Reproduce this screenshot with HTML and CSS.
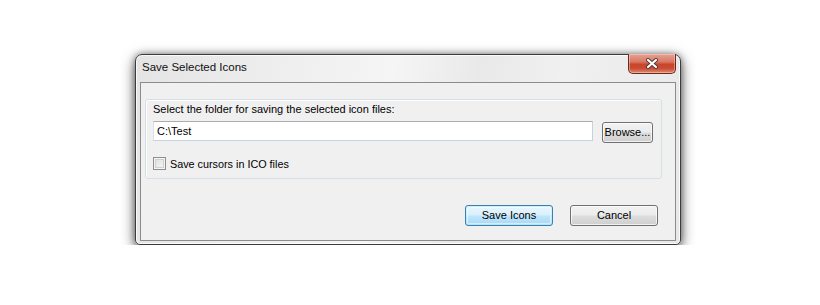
FILE: index.html
```html
<!DOCTYPE html>
<html>
<head>
<meta charset="utf-8">
<link rel="stylesheet" href="styles.css">
</head>
<body>
<div class="window">
  <div class="titlebar">
    <span class="title">Save Selected Icons</span>
    <div class="close">
      <svg width="14" height="11" viewBox="0 0 14 11">
        <path d="M3 2 L11 9 M11 2 L3 9" stroke="#4a3a38" stroke-width="4" stroke-linecap="round"/>
        <path d="M3 2 L11 9 M11 2 L3 9" stroke="#ffffff" stroke-width="2.2" stroke-linecap="round"/>
      </svg>
    </div>
  </div>
  <div class="client">
    <div class="group">
      <div class="label">Select the folder for saving the selected icon files:</div>
      <div class="path-row">
        <div class="textbox">C:\Test</div>
        <div class="btn browse">Browse...</div>
      </div>
      <div class="check-row">
        <span class="checkbox"></span>
        <span class="check-label">Save cursors in ICO files</span>
      </div>
    </div>
    <div class="actions">
      <div class="btn default">Save Icons</div>
      <div class="btn">Cancel</div>
    </div>
  </div>
</div>
</body>
</html>
```

FILE: styles.css
```css
html, body {
  margin: 0;
  padding: 0;
}
body {
  background: #ffffff;
  padding: 54px 0 0 135px;
  font-family: "Liberation Sans", Arial, sans-serif;
  font-size: 11px;
  color: #000;
}
.window {
  box-sizing: border-box;
  width: 546px;
  height: 191px;
  border: 1px solid #3c3c3c;
  border-radius: 7px 7px 5px 5px;
  background: linear-gradient(100deg, #e4e4e4 0%, #eeeeee 25%, #f5f5f5 45%, #e9e9e9 60%, #f0f0f0 75%, #e8e8e8 100%);
  box-shadow: inset 0 0 0 1px rgba(255,255,255,0.75), 0 4px 14px rgba(0,0,0,0.65), 0 0 6px rgba(0,0,0,0.35);
  padding: 0 4px 3px 4px;
  display: flex;
  flex-direction: column;
}
.titlebar {
  height: 27px;
  display: flex;
  justify-content: space-between;
  align-items: flex-start;
}
.title {
  font-size: 11.5px;
  padding: 6px 0 0 2px;
  color: #111;
}
.close {
  margin-top: -1px;
  width: 48px;
  height: 20px;
  box-sizing: border-box;
  border: 1px solid #6b2a20;
  border-top: none;
  border-radius: 0 0 5px 5px;
  background: linear-gradient(#e6a293 0%, #d97a66 40%, #c9452c 55%, #c94b32 75%, #e08a70 100%);
  box-shadow: inset 0 0 0 1px rgba(255,220,210,0.45);
  display: flex;
  align-items: center;
  justify-content: center;
}
.client {
  flex: 1;
  border: 1px solid #8a8d90;
  background: #f0f0f0;
  display: flex;
  flex-direction: column;
}
.group {
  margin: 16px 13px 0 4px;
  height: 80px;
  box-sizing: border-box;
  border: 1px solid #d5dfe5;
  border-radius: 3px;
  box-shadow: inset 1px 1px 0 #fff;
  padding: 2px 7px 0 7px;
}
.label {
  line-height: 14px;
}
.path-row {
  display: flex;
  align-items: flex-start;
  margin-top: 5px;
  gap: 9px;
}
.textbox {
  box-sizing: border-box;
  width: 440px;
  height: 20px;
  background: #fff;
  border: 1px solid #c5d3df;
  border-top-color: #abadb3;
  border-left-color: #dbdfe6;
  padding: 3px 0 0 3px;
  line-height: 13px;
}
.btn {
  box-sizing: border-box;
  width: 88px;
  height: 21px;
  border: 1px solid #707070;
  border-radius: 3px;
  background: linear-gradient(#f2f2f2 0%, #ebebeb 48%, #dddddd 52%, #cfcfcf 100%);
  box-shadow: inset 0 0 0 1px rgba(255,255,255,0.7);
  display: flex;
  align-items: center;
  justify-content: center;
  line-height: 13px;
}
.browse {
  width: 51px;
  margin-top: 1px;
}
.check-row {
  display: flex;
  align-items: center;
  margin-top: 14px;
  gap: 4px;
  height: 13px;
}
.check-label {
  font-size: 10.8px;
}
.checkbox {
  box-sizing: border-box;
  width: 13px;
  height: 13px;
  border: 1px solid #8f8f8f;
  background: linear-gradient(135deg, #dcdcdc, #f8f8f8);
  box-shadow: inset 0 0 0 1px #f4f4f4, inset 0 0 0 2px #d0d0d0;
}
.actions {
  display: flex;
  justify-content: flex-end;
  gap: 17px;
  margin-top: 26px;
  padding-right: 17px;
}
.default {
  border-color: #3c7fb1;
  background: linear-gradient(#eaf6fd 0%, #d9f0fc 48%, #bee6fd 52%, #a7d9f5 100%);
  box-shadow: inset 0 0 0 1px #48d8fb40, inset 0 0 0 2px rgba(255,255,255,0.5);
}
```
